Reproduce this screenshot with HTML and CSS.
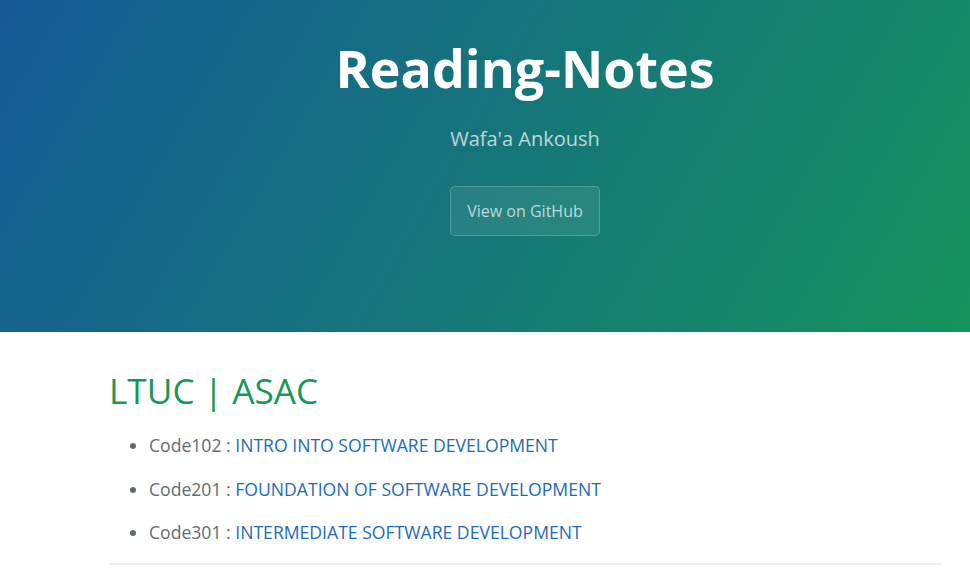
FILE: index.html
```html
<!DOCTYPE html>
<html lang="en">
<head>
<meta charset="utf-8">
<title>Reading-Notes</title>
<link rel="stylesheet" href="styles.css">
</head>
<body>
<div class="page">
  <header class="page-header">
    <h1 class="project-name">Reading-Notes</h1>
    <h2 class="project-tagline">Wafa'a Ankoush</h2>
    <a href="#" class="btn">View on GitHub</a>
  </header>
  <main class="main-content">
    <h1 class="section-title">LTUC | ASAC</h1>
    <ul class="course-list">
      <li><p>Code102 : <a href="#">INTRO INTO SOFTWARE DEVELOPMENT</a></p></li>
      <li><p>Code201 : <a href="#">FOUNDATION OF SOFTWARE DEVELOPMENT</a></p></li>
      <li><p>Code301 : <a href="#">INTERMEDIATE SOFTWARE DEVELOPMENT</a></p></li>
    </ul>
    <hr class="divider">
  </main>
</div>
</body>
</html>
```

FILE: styles.css
```css
html, body {
  margin: 0;
  padding: 0;
  overflow: hidden;
}
body {
  font-family: "Open Sans", "Liberation Sans", sans-serif;
  font-size: 16px;
  line-height: 1.5;
  color: #606c71;
  background: #fff;
}
.page {
  width: 1050px;
}
.page-header {
  color: #fff;
  text-align: center;
  background-color: #159957;
  background-image: linear-gradient(120deg, #155799 -4%, #159957 104%);
  padding: 29px 96px 96px;
}
.project-name {
  font-size: 52px;
  line-height: 78px;
  font-weight: 700;
  margin: 0 0 1.6px;
}
.project-tagline {
  font-size: 20px;
  line-height: 30px;
  font-weight: 400;
  opacity: 0.7;
  margin: 16.6px 0 32px;
}
.btn {
  display: inline-block;
  color: rgba(255, 255, 255, 0.7);
  background-color: rgba(255, 255, 255, 0.08);
  border: 1px solid rgba(255, 255, 255, 0.2);
  border-radius: 4.8px;
  padding: 12px 16px;
  font-size: 16px;
  line-height: 24px;
  text-decoration: none;
  vertical-align: top;
}
.main-content {
  max-width: 1024px;
  margin: 0 auto;
  padding: 32px 96px;
  box-sizing: border-box;
  font-size: 17.6px;
  word-wrap: break-word;
}
.section-title {
  color: #159957;
  font-weight: 400;
  font-size: 35.2px;
  line-height: 52.8px;
  margin: 0 0 16px;
}
.course-list {
  margin: 0;
  padding-left: 40px;
}
.course-list p {
  margin: 17px 0;
}
.course-list li:first-child p {
  margin-top: 0;
}
.course-list a {
  color: #1e6bb8;
  text-decoration: none;
}
.divider {
  height: 2px;
  padding: 0;
  margin: 16px 0;
  background-color: #eff0f1;
  border: 0;
}
```
